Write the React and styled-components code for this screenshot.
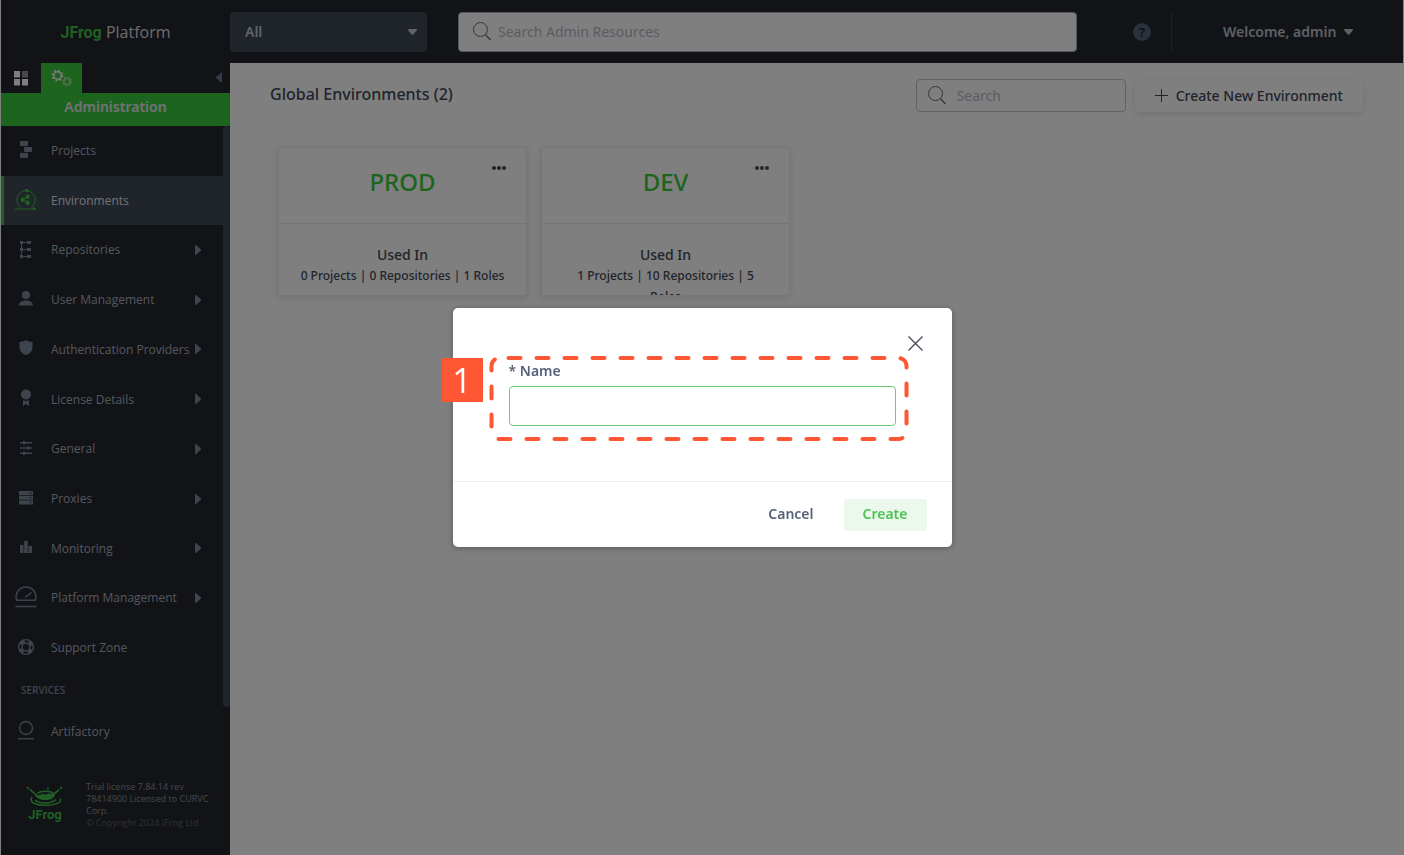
import React from 'react';
import styled, { createGlobalStyle } from 'styled-components';

const GlobalStyle = createGlobalStyle`
  * {
    box-sizing: border-box;
  }
  body {
    margin: 0;
    background: #fff;
    font-family: "Noto Sans", "Open Sans", sans-serif;
    color: #414857;
  }
  button, input, select {
    font-family: inherit;
  }
`;

const icons = {
  projects: (
    <g fill="currentColor">
      <rect x="5" y="3" width="8" height="5" rx="1" />
      <rect x="9" y="9" width="8" height="5" rx="1" />
      <rect x="5" y="15" width="8" height="5" rx="1" />
    </g>
  ),
  environments: (
    <g fill="none" stroke="currentColor" strokeWidth="1">
      <path d="M6 19.500A9.200 9.200 0 1 1 16 19.500" />
      <path d="M0 21h19" />
      <path d="M11 1l2.500 1.500-2.500 1.500zM18.500 19.500l2.500 1.500-2.500 1.500z" fill="currentColor" />
      <g fill="currentColor" stroke="none">
        <circle cx="7.800" cy="11.700" r="2.200" />
        <circle cx="12.600" cy="8.700" r="2.200" />
        <circle cx="12.600" cy="14.700" r="2.200" />
      </g>
      <path d="M12 9.500l-4 2.200 4 2.200" />
    </g>
  ),
  repositories: (
    <g fill="currentColor">
      <path d="M6 4h7v1H6zM6 11h7v1H6zM6 18h7v1H6zM6 4h1v15H6z" />
      <path d="M5 3h3v3H5zM5 10h3v3H5zM5 17h3v3H5zM12 3h4v3h-4zM12 10h4v3h-4zM12 17h4v3h-4z" />
    </g>
  ),
  users: (
    <g fill="currentColor">
      <circle cx="11" cy="7" r="4" />
      <path d="M4 17.500c0-3.600 3.600-5 7-5s7 1.400 7 5z" />
    </g>
  ),
  shield: <path fill="currentColor" d="M11 3c2 1.400 4 1.900 6.500 1.900V10c0 4-2.500 6.500-6.500 8-4-1.500-6.500-4-6.500-8V4.900C7 4.900 9 4.400 11 3z" />,
  license: (
    <g fill="currentColor">
      <circle cx="11" cy="7.500" r="5" />
      <path d="M8 13.300c2 .8 4 .8 6 0V19l-3-2-3 2z" />
    </g>
  ),
  general: (
    <g fill="currentColor">
      <path d="M5 5h12v1.500H5zM5 10.200h12v1.500H5zM5 15.500h12V17H5z" />
      <path d="M8 4h2v3.500H8zM12.500 9.200h2v3.500h-2zM8 14.500h2V18H8z" />
    </g>
  ),
  proxies: (
    <g>
      <path fill="currentColor" d="M4 4h14v4H4zM4 8.800h14v4H4zM4 13.600h14v4H4z" />
      <path stroke="#24272f" strokeWidth="1" d="M14.500 6h2M14.500 10.800h2M14.500 15.600h2" />
    </g>
  ),
  monitoring: (
    <g fill="currentColor">
      <path d="M5 9h3.500v8H5zM9.200 5h3.600v12H9.200zM13.500 10H17v7h-3.500z" />
    </g>
  ),
  platform: (
    <g fill="none" stroke="currentColor" strokeWidth="1.500">
      <path d="M1.800 14.300C-1 7 5 1 11 1s12 6 9.200 13.300z" />
      <path d="M10 11.500l6.500-5" />
      <path d="M.5 20.500h21" />
    </g>
  ),
  support: (
    <g fill="none" stroke="currentColor">
      <circle cx="11" cy="11" r="7.400" strokeWidth="1.400" />
      <circle cx="11" cy="11" r="4" strokeWidth="1.400" />
      <circle cx="11" cy="11" r="5.600" strokeWidth="3.600" strokeDasharray="4.400 4.396" strokeDashoffset="-2.200" />
    </g>
  ),
  artifactory: (
    <g fill="none" stroke="currentColor" strokeWidth="1.400">
      <circle cx="11" cy="8" r="6.500" />
      <path d="M3 18.700h16" />
    </g>
  ),
};

const navItems = [
  { icon: 'projects', label: 'Projects' },
  { icon: 'environments', label: 'Environments', active: true },
  { icon: 'repositories', label: 'Repositories', more: true },
  { icon: 'users', label: 'User Management', more: true },
  { icon: 'shield', label: 'Authentication Providers', more: true },
  { icon: 'license', label: 'License Details', more: true },
  { icon: 'general', label: 'General', more: true },
  { icon: 'proxies', label: 'Proxies', more: true },
  { icon: 'monitoring', label: 'Monitoring', more: true },
  { icon: 'platform', label: 'Platform Management', more: true },
  { icon: 'support', label: 'Support Zone' },
];

const environments = [
  { name: 'PROD', usage: '0 Projects | 0 Repositories | 1 Roles' },
  { name: 'DEV', usage: '1 Projects | 10 Repositories | 5 Roles' },
];

const Caret = () => (
  <svg width="9" height="6" viewBox="0 0 9 6" aria-hidden="true">
    <path d="M1 0h7c1 0 1.200.8.700 1.500L5.500 5.200c-.6.700-1.400.7-2 0L.3 1.500C-.2.800 0 0 1 0z" fill="currentColor" />
  </svg>
);

const SearchIcon = () => (
  <svg width="18" height="19" viewBox="0 0 18 19" fill="none" stroke="#626b7d" aria-hidden="true">
    <circle cx="7.500" cy="7.500" r="7" />
    <path d="M12.500 12.800l5 5.200" strokeWidth="1.300" />
  </svg>
);

const GearsIcon = () => (
  <svg width="22" height="18" viewBox="0 0 22 18" fill="none" stroke="#fff" aria-hidden="true">
    <circle cx="6.500" cy="6.500" r="3.700" strokeWidth="1.400" />
    <circle cx="6.500" cy="6.500" r="5.100" strokeWidth="1.600" strokeDasharray="1.800 2.206" />
    <g opacity=".6">
      <circle cx="16" cy="12.500" r="3" strokeWidth="1.200" />
      <circle cx="16" cy="12.500" r="4.200" strokeWidth="1.400" strokeDasharray="1.500 1.799" />
    </g>
  </svg>
);

const FrogSplash = () => (
  <svg width="38" height="22" viewBox="0 0 38 22" fill="none" stroke="#40be46" aria-hidden="true">
    <path d="M1 2l2 2M4 4.500l4 3.500 4 4M36 2l-2 2M33 5l-4 3-4 4" strokeWidth="1.700" />
    <path d="M11 8.500c4-3 13-3 17 0M22 2v3" strokeWidth="1.300" />
    <path d="M9 9c4 3 8-2 11 .8 3-2.800 6 0 9-1.300 0 4.500-4 6.500-9.500 6.500S9.500 13 9 9z" fill="#40be46" stroke="none" />
    <path d="M6 12c-4 6 6 8.500 14 8.300 9 0 17-3 14-6.800M9 15c4 4 17 4 21-.5" strokeWidth="1.500" />
  </svg>
);

const App = () => (
  <>
    <GlobalStyle />
    <Page>
      <Header>
        <Brand href="#">
          <strong>JFrog</strong> Platform
        </Brand>
        <ProjectPicker>
          <select aria-label="Project" defaultValue="All">
            <option>All</option>
          </select>
          <Caret />
        </ProjectPicker>
        <HeaderSearch>
          <SearchIcon />
          <input type="text" aria-label="Search Admin Resources" placeholder="Search Admin Resources" />
        </HeaderSearch>
        <HeaderRight>
          <HelpButton type="button" aria-label="Help">?</HelpButton>
          <UserMenu type="button">
            Welcome, admin
            <Caret />
          </UserMenu>
        </HeaderRight>
      </Header>

      <Body>
        <Sidebar>
          <Tabs>
            <TabButton type="button" aria-label="Application">
              <svg width="14" height="15" viewBox="0 0 14 15" fill="#fff" aria-hidden="true">
                <path d="M0 0h6v6.500H0zM0 8h6v6.500H0zM8 8h6v6.500H8z" />
                <path d="M8 0h6v6.500H8z" opacity=".5" />
              </svg>
            </TabButton>
            <TabButton type="button" aria-label="Administration" $active>
              <GearsIcon />
            </TabButton>
            <Collapse type="button" aria-label="Collapse menu">
              <svg width="6" height="11" viewBox="0 0 6 11" aria-hidden="true">
                <path d="M6 0v11L.5 6.500c-.6-.6-.6-1.400 0-2z" fill="currentColor" />
              </svg>
            </Collapse>
          </Tabs>
          <SectionTitle>Administration</SectionTitle>
          <NavArea>
            <Nav>
              <NavList>
                {navItems.map(item => (
                  <NavItem key={item.label}>
                    <NavLink href="#" $active={item.active}>
                      <NavIcon viewBox="0 0 22 22" aria-hidden="true">
                        {icons[item.icon]}
                      </NavIcon>
                      <span>{item.label}</span>
                      {item.more && (
                        <svg width="6" height="10" viewBox="0 0 6 10" aria-hidden="true">
                          <path d="M0 0h1l4.500 4c.6.600.6 1.400 0 2L1 10H0z" fill="currentColor" />
                        </svg>
                      )}
                    </NavLink>
                  </NavItem>
                ))}
              </NavList>
              <ServicesTitle>SERVICES</ServicesTitle>
              <ServiceLink href="#">
                <NavIcon viewBox="0 0 22 22" aria-hidden="true">
                  {icons.artifactory}
                </NavIcon>
                <span>Artifactory</span>
              </ServiceLink>
            </Nav>
            <ScrollThumb />
          </NavArea>
          <SidebarFooter>
            <FooterLogo>
              <FrogSplash />
              <strong>JFrog</strong>
            </FooterLogo>
            <License>
              Trial license 7.84.14 rev 78414900 Licensed to CURVC Corp.
              <small>© Copyright 2024 JFrog Ltd</small>
            </License>
          </SidebarFooter>
        </Sidebar>

        <Main>
          <Toolbar>
            <h1>Global Environments (2)</h1>
            <TableSearch>
              <SearchIcon />
              <input type="text" aria-label="Search" placeholder="Search" />
            </TableSearch>
            <NewButton type="button">
              <svg width="13" height="13" viewBox="0 0 13 13" stroke="currentColor" aria-hidden="true">
                <path d="M6.500 0v13M0 6.500h13" />
              </svg>
              Create New Environment
            </NewButton>
          </Toolbar>
          <Cards>
            {environments.map(env => (
              <Card key={env.name}>
                <CardTop>
                  <h2>{env.name}</h2>
                  <MoreButton type="button" aria-label={`${env.name} actions`}>
                    <svg width="14" height="4" viewBox="0 0 14 4" fill="currentColor" aria-hidden="true">
                      <circle cx="2" cy="2" r="2" />
                      <circle cx="7" cy="2" r="2" />
                      <circle cx="12" cy="2" r="2" />
                    </svg>
                  </MoreButton>
                </CardTop>
                <CardUsage>
                  <h3>Used In</h3>
                  <p>{env.usage}</p>
                </CardUsage>
              </Card>
            ))}
          </Cards>
        </Main>
      </Body>
    </Page>

    <Overlay>
      <Dialog role="dialog" aria-modal="true" aria-label="Create New Environment">
        <DialogBody>
          <CloseButton type="button" aria-label="Close">
            <svg width="15" height="15" viewBox="0 0 15 15" stroke="currentColor" strokeWidth="1.300" aria-hidden="true">
              <path d="M.5.500l14 14M14.500.500l-14 14" />
            </svg>
          </CloseButton>
          <Field>
            <label htmlFor="env-name">* Name</label>
            <input id="env-name" type="text" />
          </Field>
        </DialogBody>
        <DialogFooter>
          <DialogButton type="button">Cancel</DialogButton>
          <DialogButton type="button" $primary>Create</DialogButton>
        </DialogFooter>
        <StepBadge>1</StepBadge>
        <StepOutline viewBox="0 0 420 86" aria-hidden="true">
          <rect x="2.500" y="3" width="415" height="81" rx="8" />
        </StepOutline>
      </Dialog>
    </Overlay>
  </>
);

const Page = styled.div`
  display: flex;
  flex-direction: column;
  min-height: 100vh;
  padding: 0 1px;
`;

const Header = styled.header`
  display: flex;
  align-items: center;
  height: 63px;
  background: #24272f;
`;

const Brand = styled.a`
  width: 229px;
  text-align: center;
  text-decoration: none;
  font-family: "Open Sans", sans-serif;
  font-size: 16px;
  color: #d8d9dc;
  strong {
    font-family: Roboto, sans-serif;
    color: #40be46;
  }
`;

const ProjectPicker = styled.div`
  display: flex;
  align-items: center;
  width: 197px;
  color: #c4c9d4;
  select {
    flex: 1;
    height: 40px;
    margin-right: -19px;
    padding: 0 15px;
    appearance: none;
    border: 0;
    border-radius: 4px;
    background: #404957;
    color: inherit;
    font-size: 14px;
    font-weight: 600;
  }
  svg {
    z-index: 1;
    margin-right: 10px;
    pointer-events: none;
  }
`;

const HeaderSearch = styled.label`
  flex: 1;
  display: flex;
  align-items: center;
  gap: 7px;
  height: 40px;
  margin-left: 31px;
  padding: 0 14px;
  background: #fff;
  border: 1px solid #a9b0bf;
  border-radius: 4px;
  input {
    flex: 1;
    border: 0;
    outline: 0;
    background: none;
    padding: 0;
    font-size: 14px;
  }
  input::placeholder {
    color: #b4b9c8;
  }
`;

const HeaderRight = styled.div`
  display: flex;
  align-items: center;
  width: 326px;
  padding-left: 56px;
`;

const HelpButton = styled.button`
  width: 18px;
  height: 18px;
  padding: 0;
  border: 0;
  border-radius: 50%;
  background: #556277;
  color: #24272f;
  font-size: 13px;
  font-weight: 700;
  line-height: 18px;
`;

const UserMenu = styled.button`
  flex: 1;
  display: flex;
  align-items: center;
  gap: 8px;
  height: 40px;
  margin-left: 20px;
  padding: 0 0 0 51px;
  border: 0;
  border-left: 1px solid #3d424f;
  background: none;
  color: #bcc1d0;
  font-size: 14px;
  font-weight: 600;
  white-space: nowrap;
`;

const Body = styled.div`
  flex: 1;
  display: flex;
`;

const Sidebar = styled.aside`
  display: flex;
  flex-direction: column;
  width: 229px;
  flex-shrink: 0;
  background: #24272f;
`;

const Tabs = styled.div`
  display: flex;
  height: 30px;
`;

const TabButton = styled.button`
  display: flex;
  align-items: center;
  justify-content: center;
  width: ${props => (props.$active ? '41px' : '40px')};
  padding: 0;
  border: 0;
  background: ${props => (props.$active ? '#3ac83c' : 'none')};
`;

const Collapse = styled.button`
  margin-left: auto;
  padding: 0 8px;
  border: 0;
  background: none;
  color: #69758c;
`;

const SectionTitle = styled.h2`
  margin: 0;
  background: #3ac83c;
  color: #e4e6ea;
  font-size: 14px;
  font-weight: 600;
  line-height: 28px;
  height: 33px;
  text-align: center;
`;

const NavArea = styled.div`
  flex: 1;
  display: flex;
`;

const Nav = styled.nav`
  flex: 1;
  min-width: 0;
  display: flex;
  flex-direction: column;
`;

const NavList = styled.ul`
  flex: 1;
  display: flex;
  flex-direction: column;
  margin: 0;
  padding: 0;
  list-style: none;
`;

const NavItem = styled.li`
  flex: 1;
  display: flex;
`;

const NavIcon = styled.svg`
  flex-shrink: 0;
  width: 22px;
  height: 22px;
  margin-bottom: 2px;
`;

const NavLink = styled.a`
  flex: 1;
  display: flex;
  align-items: center;
  min-width: 0;
  min-height: 40px;
  padding: 0 22px 1px 11px;
  border-left: 3px solid ${props => (props.$active ? '#3ac83c' : 'transparent')};
  background: ${props => (props.$active ? '#404857' : 'none')};
  color: ${props => (props.$active ? '#3ac83c' : '#7d889c')};
  font-family: "Open Sans", sans-serif;
  font-size: 12px;
  font-weight: 500;
  text-decoration: none;
  white-space: nowrap;
  span {
    flex: 1;
    min-width: 0;
    margin-left: 14px;
    color: ${props => (props.$active ? '#e2e4ea' : '#a9afbc')};
  }
`;

const ServicesTitle = styled.h3`
  margin: 0;
  padding-left: 20px;
  color: #7d889c;
  font-family: "Open Sans", sans-serif;
  font-size: 10px;
  font-weight: 600;
  line-height: 34px;
`;

const ServiceLink = styled(NavLink)`
  flex: none;
  height: 50px;
`;

const ScrollThumb = styled.div`
  flex-shrink: 0;
  width: 7px;
  margin-bottom: 50px;
  border-radius: 4px;
  background: #404857;
`;

const SidebarFooter = styled.footer`
  display: flex;
  height: 98px;
  padding: 24px 12px 0 25px;
`;

const FooterLogo = styled.div`
  display: flex;
  flex-direction: column;
  align-items: center;
  width: 38px;
  margin-right: 22px;
  padding-top: 4px;
  color: #40be46;
  font-family: Roboto, sans-serif;
  font-size: 13px;
  line-height: 16px;
`;

const License = styled.p`
  flex: 1;
  margin: 0;
  color: #8c919c;
  font-family: "Open Sans", sans-serif;
  font-size: 9px;
  line-height: 12px;
  small {
    display: block;
    font-size: 9px;
    color: #5d616b;
    white-space: nowrap;
  }
`;

const Main = styled.main`
  flex: 1;
  padding: 16px 40px;
`;

const Toolbar = styled.div`
  display: flex;
  align-items: center;
  height: 33px;
  h1 {
    flex: 1;
    margin: 0;
    font-size: 16px;
    font-weight: 500;
    line-height: 31px;
    align-self: flex-start;
  }
`;

const TableSearch = styled(HeaderSearch)`
  flex: none;
  width: 210px;
  height: 33px;
  margin: 0 9px 0 0;
  padding: 0 11px;
  gap: 11px;
  border-color: #c0c4d2;
  input {
    width: 100px;
  }
`;

const NewButton = styled.button`
  display: flex;
  align-items: center;
  gap: 8px;
  height: 33px;
  padding: 0 20px;
  border: 0;
  border-radius: 4px;
  background: #fff;
  box-shadow: 0 2px 6px rgba(0, 0, 0, 0.12);
  color: #414857;
  font-size: 14px;
  font-weight: 500;
  white-space: nowrap;
`;

const Cards = styled.div`
  display: flex;
  flex-wrap: wrap;
  gap: 14px;
  margin: 35px 8px 0;
`;

const Card = styled.section`
  width: 249px;
  height: 149px;
  overflow: hidden;
  border: 1px solid #eceef2;
  box-shadow: 0 2px 8px rgba(0, 0, 0, 0.12);
  text-align: center;
`;

const CardTop = styled.div`
  position: relative;
  height: 76px;
  border-bottom: 1px solid #e6e8ee;
  h2 {
    margin: 0;
    color: #3ac83c;
    font-size: 24px;
    font-weight: 500;
    line-height: 68px;
  }
`;

const MoreButton = styled.button`
  position: absolute;
  top: 12px;
  right: 16px;
  display: flex;
  padding: 6px 4px;
  border: 0;
  background: none;
  color: #414857;
`;

const CardUsage = styled.div`
  padding: 20px 20px 0;
  h3, p {
    margin: 0;
    font-size: 14px;
    font-weight: 500;
    line-height: 21px;
  }
  p {
    font-size: 12px;
  }
`;

const Overlay = styled.div`
  position: fixed;
  inset: 0;
  z-index: 10;
  display: flex;
  align-items: center;
  justify-content: center;
  background: rgba(0, 0, 0, 0.5);
`;

const Dialog = styled.div`
  position: relative;
  width: 499px;
  background: #fff;
  border-radius: 5px;
  box-shadow: 0 1px 6px rgba(0, 0, 0, 0.3);
`;

const DialogBody = styled.div`
  display: flex;
  flex-direction: column;
  padding: 28px 56px 55px;
`;

const CloseButton = styled.button`
  display: flex;
  align-self: flex-end;
  margin-right: -27px;
  padding: 0;
  border: 0;
  background: none;
  color: #414857;
`;

const Field = styled.div`
  display: flex;
  flex-direction: column;
  gap: 5px;
  margin-top: 10px;
  label {
    color: #556277;
    font-size: 14px;
    font-weight: 600;
    line-height: 20px;
  }
  input {
    height: 40px;
    padding: 0 10px;
    border: 1px solid #6fcd73;
    border-radius: 4px;
    outline: 0;
    font-size: 14px;
  }
`;

const DialogFooter = styled.div`
  display: flex;
  justify-content: flex-end;
  gap: 11px;
  padding: 17px 25px 16px;
  border-top: 1px solid #eeeff2;
`;

const DialogButton = styled.button`
  height: 32px;
  padding: 0 19px 3px;
  border: 0;
  border-radius: 3px;
  background: ${props => (props.$primary ? '#ecf8ec' : 'none')};
  color: ${props => (props.$primary ? '#4cc552' : '#556277')};
  font-size: 14px;
  font-weight: 600;
`;

const StepBadge = styled.div`
  position: absolute;
  top: 50px;
  left: -11px;
  width: 41px;
  height: 44px;
  background: #ff5733;
  color: #fff;
  font-family: "Open Sans", sans-serif;
  font-size: 34px;
  line-height: 44px;
  text-align: center;
`;

const StepOutline = styled.svg`
  position: absolute;
  top: 47px;
  left: 36px;
  width: 420px;
  height: 86px;
  pointer-events: none;
  rect {
    fill: none;
    stroke: #ff5733;
    stroke-width: 4;
    stroke-linecap: round;
    stroke-dasharray: 12 16;
    stroke-dashoffset: -9;
  }
`;

export default App;
